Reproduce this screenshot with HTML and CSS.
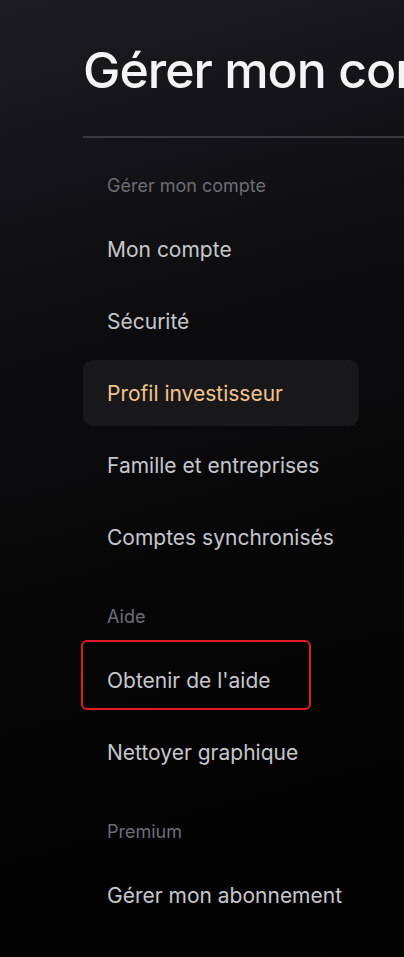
FILE: index.html
```html
<!DOCTYPE html>
<html lang="fr">
<head>
    <meta charset="UTF-8">
    <meta name="viewport" content="width=device-width, initial-scale=1.0">
    <title>Gérer mon compte</title>
    <link rel="stylesheet" href="styles.css">
</head>
<body>
    <div class="page">
        <h1 class="title">Gérer mon compte</h1>
        <hr class="divider">

        <!-- Compte -->
        <nav class="menu">
            <div class="section-label">Gérer mon compte</div>
            <a class="menu-item" href="#">Mon compte</a>
            <a class="menu-item" href="#">Sécurité</a>
            <a class="menu-item active" href="#">Profil investisseur</a>
            <a class="menu-item" href="#">Famille et entreprises</a>
            <a class="menu-item" href="#">Comptes synchronisés</a>

            <!-- Aide -->
            <div class="section-label">Aide</div>
            <a class="menu-item" href="#">Obtenir de l'aide<span class="highlight"></span></a>
            <a class="menu-item" href="#">Nettoyer graphique</a>

            <!-- Premium -->
            <div class="section-label">Premium</div>
            <a class="menu-item" href="#">Gérer mon abonnement</a>
        </nav>
    </div>
</body>
</html>
```

FILE: styles.css
```css
html, body {
    margin: 0;
    height: 100%;
}

body {
    font-family: Inter, "Noto Sans", sans-serif;
    background: linear-gradient(165deg, #1c1b20 0%, #0c0c0e 35%, #040404 70%, #020202 100%);
    color: #c8c9ce;
    overflow: hidden;
}

.page {
    padding: 0 0 0 83px;
}

.title {
    margin: 0;
    padding-top: 40px;
    font-size: 50px;
    font-weight: 500;
    line-height: 60px;
    letter-spacing: -0.02em;
    color: #f4f4f6;
    white-space: nowrap;
}

.divider {
    margin: 36px 0 0 0;
    border: none;
    border-top: 2px solid #38383d;
    width: 600px;
}

.menu {
    display: flex;
    flex-direction: column;
    width: 276px;
    padding-top: 28px;
}

.section-label {
    padding-left: 24px;
    font-size: 18px;
    line-height: 40px;
    color: #6d6d73;
}

.menu-item {
    position: relative;
    display: flex;
    align-items: center;
    height: 66px;
    margin-bottom: 6px;
    padding: 0 24px;
    border-radius: 10px;
    font-size: 21px;
    color: #c6c7cc;
    text-decoration: none;
    white-space: nowrap;
}

.menu-item.active {
    background: #18181b;
    color: #f1c48c;
}

.section-label + .menu-item {
    margin-top: 10px;
}

.menu-item + .section-label {
    margin-top: 21px;
}

.highlight {
    position: absolute;
    left: -2px;
    top: -7px;
    width: 226px;
    height: 66px;
    border: 2px solid #e11b25;
    border-radius: 6px;
}
```
